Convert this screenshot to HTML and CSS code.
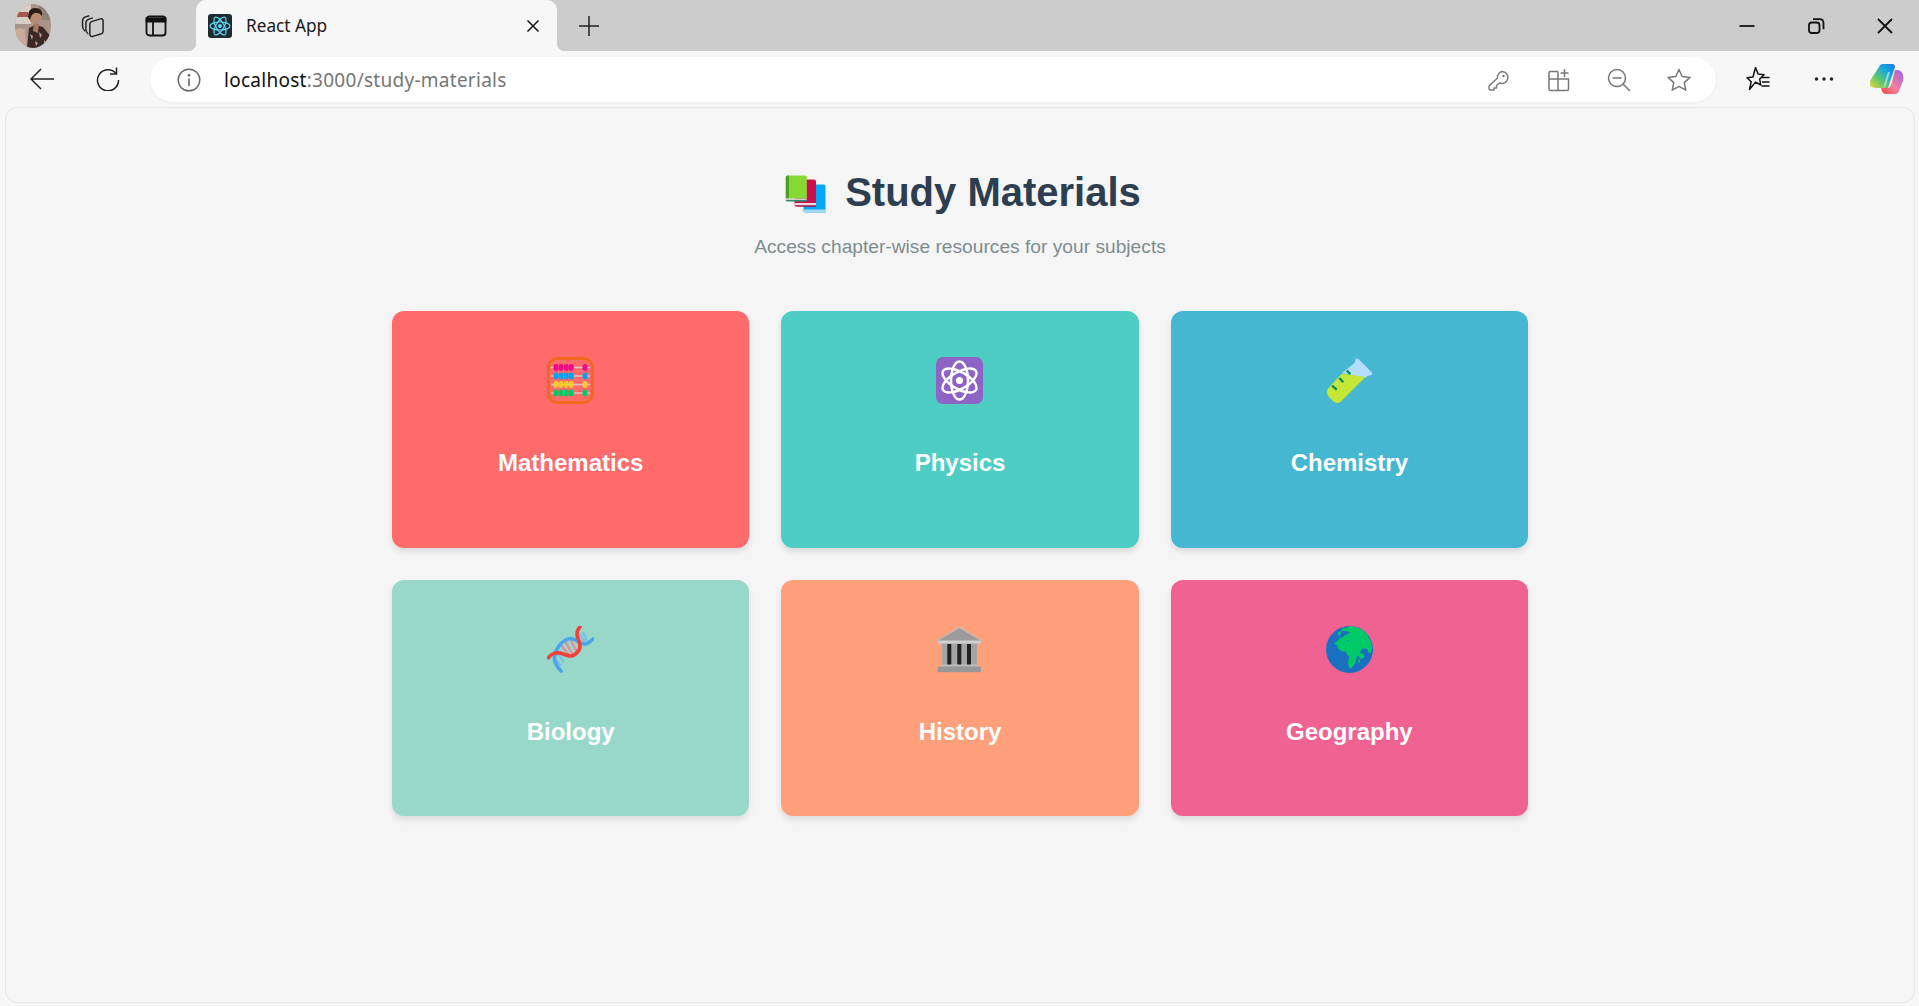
FILE: index.html
```html
<!DOCTYPE html>
<html lang="en">
<head>
<meta charset="utf-8">
<title>React App</title>
<link rel="stylesheet" href="styles.css">
</head>
<body>
<div class="tabstrip">
  <svg class="avatar" viewBox="0 0 36 44"><defs><clipPath id="av"><ellipse cx="18" cy="22" rx="18" ry="22"/></clipPath></defs><g clip-path="url(#av)"><rect width="36" height="44" fill="#a9938a"/><rect width="16" height="20" fill="#d8cdc8"/><rect x="2" y="8" width="11" height="5" fill="#a8584a"/><rect x="24" y="0" width="12" height="16" fill="#8f8078"/><path d="M0 26q6-4 10 0l2 18H0z" fill="#c9aa9c"/><path d="M12 44l2-20 6-3 8 2 8 10v11z" fill="#3a2a26"/><path d="M15 30l3 2-1 4zM24 28l3 3-2 3zM20 37l3 2-2 3zM29 36l2 2-2 2z" fill="#c99"/><circle cx="20" cy="13" r="6.500" fill="#b98a72"/><path d="M13 13q0-9 7-9 8 0 7 8-3-4-7-3-4 1-5 7z" fill="#2a1d1a"/><path d="M19 19l5 1-1 9-5-2z" fill="#a87a64"/></g></svg>
  <svg class="ico ml30" viewBox="1 1 22 23" fill="none" stroke="#222" stroke-width="1.400" stroke-linejoin="round"><path d="M4.500 17.500Q2 15.500 2 13V7.500Q2 4.700 4.800 3.800L8.500 2.700"/><path d="M7.500 20.200Q5.200 18.500 5.200 15.500V9.500Q5.200 6.800 8 5.900L12 4.700"/><path d="M9 10.700Q9 8.900 10.700 8.300L19 5.700Q21.700 5 21.700 7.700V17.500Q21.700 19.300 20 19.900L12 22.400Q9 23.200 9 20.500Z"/></svg>
  <svg class="ico ml39" viewBox="0 0 24 24" fill="none" stroke="#111" stroke-width="1.800"><rect x="2.500" y="2.500" width="19" height="19" rx="3"/><path d="M2.500 4.500h19v3h-19z" fill="#111"/><path d="M9 7v14"/></svg>
  <div class="tab">
    <svg class="favicon" viewBox="0 0 24 24"><rect width="24" height="24" rx="3" fill="#1f2a30"/><g fill="none" stroke="#61dafb" stroke-width="1.200"><ellipse cx="12" cy="12" rx="10" ry="4"/><ellipse cx="12" cy="12" rx="10" ry="4" transform="rotate(60 12 12)"/><ellipse cx="12" cy="12" rx="10" ry="4" transform="rotate(120 12 12)"/></g><circle cx="12" cy="12" r="2" fill="#61dafb"/></svg>
    <span class="tab-title">React App</span>
    <svg class="tab-close" viewBox="0 0 14 14" fill="none" stroke="#111" stroke-width="1.500"><path d="M1.500 1.500l11 11M12.500 1.500l-11 11"/></svg>
  </div>
  <svg class="ico ml20" viewBox="0 0 24 24" fill="none" stroke="#222" stroke-width="1.500"><path d="M12 2v20M2 12h20"/></svg>
  <div class="grow"></div>
  <svg class="ico" viewBox="0 0 24 24" fill="none" stroke="#111" stroke-width="1.800"><path d="M4.500 12h15"/></svg>
  <svg class="ico ml45" viewBox="0 0 24 24" fill="none" stroke="#111" stroke-width="1.800"><rect x="5" y="8.500" width="10.500" height="10.500" rx="2.800"/><path d="M9 5.200h6.500q4 0 4 4v6"/></svg>
  <svg class="ico ml45" viewBox="0 0 24 24" fill="none" stroke="#111" stroke-width="1.800"><path d="M5 5l14 14M19 5L5 19"/></svg>
</div>
<div class="toolbar">
  <svg class="ico" viewBox="0 0 24 24" fill="none" stroke="#222" stroke-width="1.500"><path d="M24 12H1M11 2L1 12l10 10"/></svg>
  <svg class="ico ml42" viewBox="0 0 24 24" fill="none" stroke="#222" stroke-width="1.500"><path d="M20 6.500A10.500 10.500 0 1 0 22.500 13"/><path d="M20.500 0.500v6.500H14"/></svg>
  <div class="address">
    <svg class="info" viewBox="0 0 24 24" fill="none" stroke="#666" stroke-width="1.400"><circle cx="12" cy="12" r="10.800"/><path d="M12 10.500v7.500" stroke-width="1.600"/><circle cx="12" cy="7.300" r=".7" fill="#666"/></svg>
    <div class="url"><span class="url-host">localhost</span>:3000/study-materials</div>
    <svg class="ico" viewBox="0 0 24 24" fill="none" stroke="#777" stroke-width="1.400"><path d="M15 3.500a6 6 0 1 1-2.500 11.500L9.500 17.500v2.500H7v2H3l-1-1v-3l8.500-8A6 6 0 0 1 15 3.500z" stroke-linejoin="round"/><circle cx="16.500" cy="8" r="1.200" fill="#777" stroke="none"/></svg>
    <svg class="ico ml36" viewBox="0 0 24 24" fill="none" stroke="#777" stroke-width="1.500"><path d="M11 3.500H3.500a1.500 1.500 0 0 0-1.500 1.500V21a1.500 1.500 0 0 0 1.500 1.500H20a1.500 1.500 0 0 0 1.500-1.500V11H2M11 3.500V22.500M17.500 1v8M13.500 5h8"/></svg>
    <svg class="ico ml36" viewBox="0 0 24 24" fill="none" stroke="#777" stroke-width="1.500"><circle cx="10" cy="10" r="8.500"/><path d="M5.500 10h9M16 16l7 7"/></svg>
    <svg class="ico ml36" viewBox="0 0 24 24" fill="none" stroke="#777" stroke-width="1.500" stroke-linejoin="round"><path d="M12 1.500l3.200 7 7.800.9-5.800 5.200 1.600 7.600L12 18.400l-6.800 3.800 1.600-7.600L1 9.400l7.800-.9z"/></svg>
  </div>
  <svg class="ico ml30" viewBox="0 0 24 24" fill="none" stroke="#111" stroke-width="1.500" stroke-linejoin="round"><path d="M9.500 .5l2.600 6.500 6 .8-4.400 4.200 1 6-5.200-2.900L3.500 22.500l1.700-7.700L1 10.800l6-.8z"/><path d="M15.500 10.500h8M16 15h7.500M15.500 19h8"/></svg>
  <svg class="ico ml42" viewBox="0 0 24 24" fill="#222"><circle cx="4.500" cy="12" r="1.700"/><circle cx="12" cy="12" r="1.700"/><circle cx="19.500" cy="12" r="1.700"/></svg>
  <svg class="copilot" viewBox="0 0 34 30"><defs><linearGradient id="cp1" x1="0" y1="1" x2="1" y2="0"><stop offset="0" stop-color="#f5d53a"/><stop offset=".35" stop-color="#5fc96a"/><stop offset=".7" stop-color="#12a6e6"/><stop offset="1" stop-color="#2b6fe0"/></linearGradient><linearGradient id="cp2" x1="0" y1="1" x2="1" y2="0"><stop offset="0" stop-color="#f0473e"/><stop offset=".45" stop-color="#f27fa0"/><stop offset="1" stop-color="#9d5fe0"/></linearGradient></defs><path d="M9 3Q10 0 13 0h9q3 0 3 3l-7 21H6Q1 24 0 21q-.5-2 .5-5z" fill="url(#cp1)"/><path d="M25 6h3q4 1 5 5 1 3 0 6l-4 10q-1 3-4 3h-9q-3 0-4-3l-1-3h6q3 0 4-3z" fill="url(#cp2)"/><path d="M13 24l5-16h2l-4 13q-1 3-3 3z" fill="#f7f7f7" opacity=".55"/></svg>
</div>
<main class="page">
  <h1 class="heading">
    <svg class="books" viewBox="-.5 -.5 55 48"><path d="M26 16h18q2 0 2 2v26H26q-2 0-2-2V18q0-2 2-2z" fill="#03a9f4"/><path d="M24 41h22v3H26q-2 0-2-1.500z" fill="#a7d8ee"/><path d="M17 11h17.500q2 0 2 2v25H17q-2 0-2-2V13q0-2 2-2z" fill="#cc0e4f"/><path d="M15 34.500h21.500V37H17q-2 0-2-1z" fill="#e8dfe2"/><path d="M15 37h21.500v1H17z" fill="#a00d40"/><path d="M8.300 7h17q2 0 2 2v21H6.300V9q0-2 2-2z" fill="#86d932"/><path d="M8.300 7h1.200v23H6.300V9q0-2 2-2z" fill="#4f9e24"/><path d="M6.300 30h21v1.500h-21z" fill="#c7d3c5"/><path d="M6.300 31.500h21V33H8q-1.700 0-1.700-1z" fill="#2f8f6a"/></svg>
    <span>Study Materials</span>
  </h1>
  <p class="subtitle">Access chapter-wise resources for your subjects</p>
  <div class="grid">
    <a class="card c-math">
      <svg class="emoji" viewBox="0 0 47 47"><rect x="1.500" y="1.500" width="44" height="44" rx="9" fill="none" stroke="#f4671f" stroke-width="3"/><g stroke="#d5c8c8" stroke-width="1.500"><path d="M4 10.500h39M4 19h39M4 27.500h39M4 36h39"/></g><g fill="#ee0a8a"><rect x="6.500" y="7" width="5" height="7" rx="2.400"/><rect x="11.500" y="7" width="5" height="7" rx="2.400"/><rect x="16.800" y="7" width="5" height="7" rx="2.400"/><rect x="21.800" y="7" width="5" height="7" rx="2.400"/><rect x="35.500" y="7" width="5" height="7" rx="2.400"/></g><g fill="#08a3ef"><rect x="6.500" y="15.500" width="5" height="7" rx="2.400"/><rect x="11.500" y="15.500" width="5" height="7" rx="2.400"/><rect x="16.800" y="15.500" width="5" height="7" rx="2.400"/><rect x="21.800" y="15.500" width="5" height="7" rx="2.400"/><rect x="35.500" y="15.500" width="5" height="7" rx="2.400"/></g><g fill="#fdca2e"><rect x="6.500" y="24" width="5" height="7" rx="2.400"/><rect x="11.500" y="24" width="5" height="7" rx="2.400"/><rect x="16.800" y="24" width="5" height="7" rx="2.400"/><rect x="21.800" y="24" width="5" height="7" rx="2.400"/><rect x="35.500" y="24" width="5" height="7" rx="2.400"/></g><g fill="#03c864"><rect x="6.500" y="32.500" width="5" height="7" rx="2.400"/><rect x="11.500" y="32.500" width="5" height="7" rx="2.400"/><rect x="16.800" y="32.500" width="5" height="7" rx="2.400"/><rect x="21.800" y="32.500" width="5" height="7" rx="2.400"/><rect x="35.500" y="32.500" width="5" height="7" rx="2.400"/></g></svg>
      <span class="card-title">Mathematics</span>
    </a>
    <a class="card c-phys">
      <svg class="emoji" viewBox="0 0 47 47"><rect width="47" height="47" rx="7" fill="#8e63c6"/><g fill="none" stroke="#fff" stroke-width="2.400"><ellipse cx="23.500" cy="23.500" rx="19" ry="8.500" transform="rotate(90 23.500 23.500)"/><ellipse cx="23.500" cy="23.500" rx="19" ry="8.500" transform="rotate(30 23.500 23.500)"/><ellipse cx="23.500" cy="23.500" rx="19" ry="8.500" transform="rotate(-30 23.500 23.500)"/></g><circle cx="23.500" cy="23.500" r="3.500" fill="#fff"/></svg>
      <span class="card-title">Physics</span>
    </a>
    <a class="card c-chem">
      <svg class="emoji" viewBox="0 0 47 47"><path d="M16 16L28.500 6 29.500 2q1.500-1.500 3 0l13 13q1.500 1.500 0 3l-4 1L39 21z" fill="#b4dcff"/><path d="M16 16.500L39.500 20 15 44.500q-3 2.500-7 .5L2.500 39.500Q-1 35 2.500 31z" fill="#c4e635"/><path d="M20.700 13.500l3.600 3.700M13.300 21l4 4.300M6 28.700l4.700 4" stroke="#0a8a66" stroke-width="2.400" fill="none"/></svg>
      <span class="card-title">Chemistry</span>
    </a>
    <a class="card c-bio">
      <svg class="emoji" viewBox="0 0 47 47"><g stroke="#7fbce8" stroke-width="2.200" fill="none"><path d="M8 32l6 8M11 28l6 8M33 8l5 9M36 6l4 9"/></g><g stroke="#e88aa0" stroke-width="2.200" fill="none"><path d="M14 19l8 10M18 15l8 14M23 13l7 13"/></g><path d="M14 45C9 40 6 33 8 29 10 20 17 13 23 12.700 29 12 32 18 37 18 41 18 44 15 46 13" fill="none" stroke="#4aa5ea" stroke-width="3.600" stroke-linecap="round"/><path d="M1.500 31.700C4 28 8 26.700 11 26.700 16 27 19 30 23 30 28 30 33 25 33 20 33 15 30 12 30 8 30 5 32 2 33 1" fill="none" stroke="#f5403a" stroke-width="3.600" stroke-linecap="round"/></svg>
      <span class="card-title">Biology</span>
    </a>
    <a class="card c-hist">
      <svg class="emoji" viewBox="0 0 47 47"><rect x="6" y="16" width="35" height="25" fill="#a4a4a4"/><path d="M23.300.7L45 14v2H1.700v-2z" fill="#9b9b9b"/><path d="M1.700 14.500h43.300v3H1.700z" fill="#cfcfcf"/><path d="M23.300.7L45 14h-1.500L23.300 2 3 14H1.700z" fill="#c4c4c4"/><g fill="#212121"><rect x="11.300" y="18" width="4" height="22"/><rect x="21.300" y="18" width="4" height="22"/><rect x="31" y="18" width="4" height="22"/></g><rect x="6" y="38.500" width="35" height="2" fill="#bdbdbd"/><rect x="1.700" y="40.700" width="43.300" height="5.500" fill="#989898"/></svg>
      <span class="card-title">History</span>
    </a>
    <a class="card c-geo">
      <svg class="emoji" viewBox="0 0 47 47"><circle cx="23.500" cy="23.500" r="23.500" fill="#1b6fc0"/><path d="M11 7l4-2 2-3.500 3 .500 5-2 4 1 6 2 6 5 4 8 1 6-1 5-3-1-.500-3-4-.5-2 .5-2 4 4 1 1 3-3 2-2-1-3-7-.5-2-3 0-1-6-3-1-.5-2h-4l-3 2-3 1-1-2 3-3-2-3z" fill="#00c967"/><path d="M8 17.500l6-4 7 .500 2 2 3-.500 3 3 5 1 3-1 1 2-3 2-1 6-3 2-2 7-4 5-2-1-1-5 1-6-2-2-1-3h-4l-4-3-1-3z" fill="#00c967"/><path d="M32 33l1.500 0 .500 3-1.500 1.500z" fill="#00c967"/><path d="M16 5l5 0 3 2-5 2-3 3-3-2z" fill="#1b6fc0"/></svg>
      <span class="card-title">Geography</span>
    </a>
  </div>
</main>
</body>
</html>
```
FILE: styles.css
```css
* { box-sizing: border-box; }
html, body { height: 100%; }
body {
  margin: 0;
  height: 1006px;
  overflow: hidden;
  display: flex;
  flex-direction: column;
  background: #f7f7f7;
  font-family: "Liberation Sans", Arial, sans-serif;
}
.tabstrip {
  height: 51px;
  flex: none;
  display: flex;
  align-items: center;
  background: #cccccc;
  padding: 0 22px 0 15px;
}
.ico { width: 24px; height: 24px; flex: none; }
.ml20 { margin-left: 20px; }
.ml30 { margin-left: 30px; }
.ml36 { margin-left: 36px; }
.ml39 { margin-left: 39px; }
.ml42 { margin-left: 42px; }
.ml45 { margin-left: 45px; }
.grow { flex: 1; }
.avatar { width: 36px; height: 44px; flex: none; }
.tab {
  position: relative;
  align-self: stretch;
  width: 361px;
  margin-left: 28px;
  display: flex;
  align-items: center;
  padding: 0 17px 0 12px;
  background: #f7f7f7;
  border-radius: 10px 10px 0 0;
}
.tab::before, .tab::after {
  content: "";
  position: absolute;
  bottom: 0;
  width: 8px;
  height: 8px;
}
.tab::before { left: -8px; background: radial-gradient(circle at 0 0, transparent 8px, #f7f7f7 8.5px); }
.tab::after { right: -8px; background: radial-gradient(circle at 100% 0, transparent 8px, #f7f7f7 8.5px); }
.favicon { width: 24px; height: 24px; flex: none; }
.tab-title {
  margin-left: 14px;
  flex: 1;
  font: 17.200px "Noto Sans", sans-serif;
  color: #1a1a1a;
}
.tab-close { width: 14px; height: 14px; flex: none; }
.toolbar {
  height: 56px;
  flex: none;
  display: flex;
  align-items: center;
  padding: 0 15px 0 30px;
  background: #f7f7f7;
}
.address {
  width: 1566px;
  height: 45px;
  margin: 1px 0 0 30px;
  display: flex;
  align-items: center;
  padding: 0 25px 0 28px;
  background: #fff;
  border-radius: 23px;
  box-shadow: 0 1px 3px rgba(0, 0, 0, .06);
}
.info { width: 24px; height: 24px; flex: none; margin-left: -1px; }
.url {
  flex: 1;
  margin-left: 23px;
  font: 19px "Noto Sans", sans-serif;
  letter-spacing: .27px;
  color: #767676;
}
.url-host { color: #111; }
.copilot { width: 34px; height: 30px; margin-left: 34px; flex: none; }
.page {
  flex: 1;
  margin: 0 4px 3px 5px;
  padding-top: 60px;
  background: #f5f5f5;
  border: 1px solid #e6e6e6;
  border-radius: 12px;
  display: flex;
  flex-direction: column;
  align-items: center;
}
.heading {
  margin: 0;
  display: flex;
  align-items: center;
  gap: 11px;
  font-size: 40px;
  line-height: 46px;
  font-weight: 700;
  color: #2c3e50;
}
.books { width: 55px; height: 48px; flex: none; }
.subtitle {
  margin: 20px 0 0;
  font-size: 19.200px;
  line-height: 22px;
  color: #7f8c8d;
}
.grid {
  width: 1136px;
  margin-top: 53px;
  display: grid;
  grid-template-columns: repeat(3, 1fr);
  gap: 32px;
}
.card {
  height: 236.500px;
  padding-top: 46px;
  display: flex;
  flex-direction: column;
  align-items: center;
  border-radius: 12px;
  box-shadow: 0 4px 6px rgba(0, 0, 0, .1);
  color: #fff;
}
.emoji { width: 47px; height: 47px; flex: none; }
.card-title {
  margin-top: 45px;
  font-size: 24px;
  line-height: 28px;
  font-weight: 700;
}
.c-math { background: #ff6b6b; }
.c-phys { background: #4ecdc4; }
.c-chem { background: #45b7d1; }
.c-bio { background: #98d8c8; }
.c-hist { background: #ffa07a; }
.c-geo { background: #f06292; }
```
